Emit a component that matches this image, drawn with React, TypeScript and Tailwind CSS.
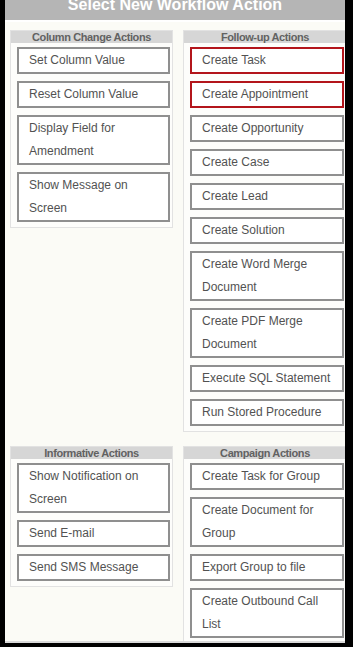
type Action = { label: string; highlight?: boolean }

const columnChange: Action[] = [
  { label: 'Set Column Value' },
  { label: 'Reset Column Value' },
  { label: 'Display Field for Amendment' },
  { label: 'Show Message on Screen' },
]

const followUp: Action[] = [
  { label: 'Create Task', highlight: true },
  { label: 'Create Appointment', highlight: true },
  { label: 'Create Opportunity' },
  { label: 'Create Case' },
  { label: 'Create Lead' },
  { label: 'Create Solution' },
  { label: 'Create Word Merge Document' },
  { label: 'Create PDF Merge Document' },
  { label: 'Execute SQL Statement' },
  { label: 'Run Stored Procedure' },
]

const informative: Action[] = [
  { label: 'Show Notification on Screen' },
  { label: 'Send E-mail' },
  { label: 'Send SMS Message' },
]

const campaign: Action[] = [
  { label: 'Create Task for Group' },
  { label: 'Create Document for Group' },
  { label: 'Export Group to file' },
  { label: 'Create Outbound Call List' },
]

function ActionPanel({ title, actions }: { title: string; actions: Action[] }) {
  return (
    <div className="border border-[#e2e2e2] bg-[#fdfdfb]">
      <div className="h-[12px] bg-[#d6d6d6] text-center text-[11px] font-bold leading-[12px] tracking-[-0.4px] text-[#626262]">
        {title}
      </div>
      <div className="flex flex-col gap-[7px] pt-[4px] pb-[5px] pl-[6px] pr-[2px]">
        {actions.map((a) => (
          <button
            key={a.label}
            className={`border-2 bg-white pl-[10px] pr-1 text-left text-[12px] leading-[23px] text-[#525252] ${
              a.highlight ? 'border-[#b3151b]' : 'border-[#8f8f8f]'
            }`}
          >
            {a.label}
          </button>
        ))}
      </div>
    </div>
  )
}

export default function App() {
  return (
    <div className="h-[647px] w-[353px] overflow-hidden bg-black font-['Liberation_Sans',Arial,sans-serif]">
      <div className="ml-[5px] h-[643px] w-[340px] overflow-hidden border-b-2 border-[#d9d9d9] bg-[#fbfbf6]">
        <div className="h-[22px] overflow-hidden border-b-2 border-white bg-[#b5b5b5] text-center">
          {/* title sits partly above the crop, as in the original capture */}
          <div className="-mt-[3px] text-[16px] font-bold leading-[16px] text-white">
            Select New Workflow Action
          </div>
        </div>

        <div className="grid grid-cols-[163px_164px] items-start gap-x-[10px] gap-y-[14px] pl-[5px] pt-[8px]">
          <ActionPanel title="Column Change Actions" actions={columnChange} />
          <ActionPanel title="Follow-up Actions" actions={followUp} />
          <ActionPanel title="Informative Actions" actions={informative} />
          <ActionPanel title="Campaign Actions" actions={campaign} />
        </div>
      </div>
    </div>
  )
}
